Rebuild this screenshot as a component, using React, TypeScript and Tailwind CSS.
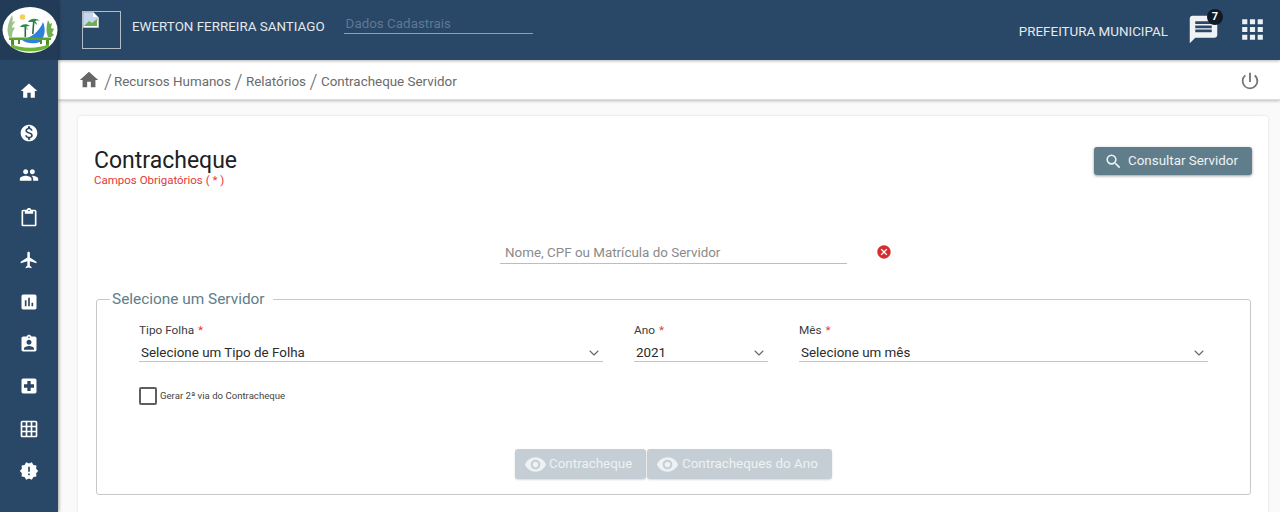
import {
  MdApps,
  MdAssessment,
  MdAssignmentInd,
  MdCancel,
  MdContentPaste,
  MdFlight,
  MdGridOn,
  MdHome,
  MdLocalHospital,
  MdMessage,
  MdMonetizationOn,
  MdNewReleases,
  MdPeople,
  MdPowerSettingsNew,
  MdSearch,
  MdVisibility,
} from "react-icons/md";
import { ChevronDown } from "lucide-react";

const menu = [
  MdHome,
  MdMonetizationOn,
  MdPeople,
  MdContentPaste,
  MdFlight,
  MdAssessment,
  MdAssignmentInd,
  MdLocalHospital,
  MdGridOn,
  MdNewReleases,
];

const Logo = () => (
  <svg viewBox="0 0 56 48" className="w-[56px] h-[48px]">
    <ellipse cx="28" cy="24" rx="27.5" ry="23" fill="#ffffff" />
    <circle cx="20.5" cy="11" r="2.8" fill="#f3cf55" />
    {/* side plants */}
    <path d="M7 31C4 24 6 17 10 9c1 3 1 5 0 7 2-1 3-1 3 0-2 2-3 4-3 6 1-1 2-1 3 0-2 2-3 5-3 9z" fill="#9cc48a" />
    <path d="M46 31c-2-5-2-10 0-17l2 4 2-1-1 5 3 1-2 4 2 2-3 2z" fill="#6fae4f" />
    {/* palms */}
    <path d="M22.5 20h1.6v11h-1.6zM31 15h1.6l-1 13h-1.6z" fill="#2c6b3f" />
    <path d="M18 21c1-3 7-4 10-1-2 0-3 0-4 1 1 1 2 2 2 3-2-2-3-3-3-3-2 0-3 0-5 0zM26 16c1-3 8-5 12-1-3-1-4 0-5 0 1 1 2 2 2 4-2-2-3-3-4-3-2 0-3 0-5 0z" fill="#2f8a4a" />
    {/* boat */}
    <path d="M20 34c9-2 18-9 21-18 3 7 2 15-3 20-5 2-13 2-18-2z" fill="#2f7fdc" />
    {/* bars */}
    <path d="M7 31.5h42v2.6H7z" fill="#58a52e" />
    <path d="M9 34h3v6H9zM44 34h3v6h-3zM16 34h2v4h-2zM38 34h2v4h-2z" fill="#4c8f2a" />
    <path d="M9 38c11 5 27 5 38 0v3c-11 6-27 6-38 0z" fill="#6cb536" />
  </svg>
);

const BrokenImage = () => (
  <svg viewBox="0 0 16 16" className="w-4 h-4">
    <path d="M.5.5h10l5 5v10H.5z" fill="#fff" stroke="#b9c3cc" />
    <path d="M1 1h9v4h5v3L9 14H1z" fill="#c5d7ee" />
    <path d="M1 14l5-5 3 2 5-4v7H1z" fill="#6fae4f" />
  </svg>
);

const Select = ({
  label,
  value,
  className,
}: {
  label: string;
  value: string;
  className: string;
}) => (
  <div className={className}>
    <div className="h-[22px] text-[11.8px] leading-[16px] text-[#3c3c3c]">
      {label} <span className="text-[#e53935] ml-[1px]">*</span>
    </div>
    <div className="flex items-center justify-between h-[18px] border-b border-[#c4c4c4] pl-[2px] pr-[1px] text-[13.4px] leading-[16px] text-[#2b2b2b]">
      <span>{value}</span>
      <ChevronDown size={16} strokeWidth={1.6} className="text-[#666]" />
    </div>
  </div>
);

const App = () => {
  return (
    <div className="flex h-[512px] w-[1280px] overflow-hidden bg-white font-['Roboto',sans-serif]">
      <aside className="w-[58px] shrink-0 bg-[#294766] shadow-[1px_0_3px_rgba(0,0,0,0.35)] z-20">
        <div className="h-[60px] bg-[#223c58] flex items-center justify-center pl-[2px]">
          <Logo />
        </div>
        <nav className="pt-[10px]">
          {menu.map((Icon, i) => (
            <div key={i} className="h-[42.2px] flex items-center justify-center text-white">
              <Icon size={20} />
            </div>
          ))}
        </nav>
      </aside>

      <div className="flex-1 min-w-0 flex flex-col">
        <header className="h-[60px] shrink-0 bg-[#294766] flex items-center pl-[24px] pr-[12px] z-10 shadow-[0_1px_3px_rgba(0,0,0,0.3)]">
          <div className="w-[39px] h-[38px] border border-[#b3bdc7] -mt-[1px]">
            <BrokenImage />
          </div>
          <span className="ml-[11px] text-[13.4px] text-[#e4e9ee] -mt-[5px]">
            EWERTON FERREIRA SANTIAGO
          </span>
          <div className="ml-[19px] w-[189px] h-[18px] border-b border-[#8d9fb1] pl-[2px] text-[13.4px] leading-[16px] text-[#5d7997] -mt-[10px]">
            Dados Cadastrais
          </div>
          <span className="ml-auto text-[13.4px] text-[#e4e9ee] mt-[4px]">PREFEITURA MUNICIPAL</span>
          <div className="relative ml-[19px] -mt-[1px] text-[#f0f3f6]">
            <MdMessage size={33} />
            <span className="absolute -top-[4px] left-[20px] w-[16px] h-[16px] rounded-full bg-[#0f1a26] text-white text-[11px] leading-[16px] font-bold text-center">
              7
            </span>
          </div>
          <MdApps size={31} className="ml-[17px] -mt-[1px] text-[#eef1f4]" />
        </header>

        <div className="h-[40px] shrink-0 bg-white flex items-center pt-[5px] pl-[20px] pr-[19px] text-[13.4px] text-[#6b6b6b] border-b border-[#ddd] shadow-[0_1px_3px_rgba(0,0,0,0.25)] z-[5]">
          <MdHome size={22} className="text-[#666] -mt-[4px]" />
          <span className="ml-[4px] text-[20px] leading-[20px] font-light">/</span>
          <span className="ml-[2px]">Recursos Humanos</span>
          <span className="mx-[3.5px] text-[20px] leading-[20px] font-light">/</span>
          <span>Relatórios</span>
          <span className="mx-[3.5px] text-[20px] leading-[20px] font-light">/</span>
          <span>Contracheque Servidor</span>
          <MdPowerSettingsNew size={22} className="ml-auto text-[#757575] -mt-[3px]" />
        </div>

        <main className="flex-1 min-h-0 bg-[#fafafa] pl-[20px] pr-[12px] pt-[16px]">
          <section className="h-[420px] bg-white rounded-[3px] shadow-[0_0_3px_rgba(0,0,0,0.12)] pl-[16px] pr-[16px] pt-[31px]">
            <div className="flex items-start justify-between">
              <div>
                <h1 className="text-[23px] leading-[28px] text-[#212121]">Contracheque</h1>
                <p className="text-[11.5px] leading-[12px] -mt-[1px] text-[#e53935]">
                  Campos Obrigatórios ( * )
                </p>
              </div>
              <button className="w-[158px] h-[28px] bg-[#607d8b] rounded-[3px] pl-[10px] text-[13.4px] text-[#eef2f4] flex items-center gap-[5px] shadow-[0_1px_3px_rgba(0,0,0,0.4)]">
                <MdSearch size={19} />
                Consultar Servidor
              </button>
            </div>

            <div className="flex items-center ml-[406px] mt-[56px]">
              <div className="w-[347px] h-[22px] border-b border-[#bdbdbd] pl-[5px] pt-[2px] text-[13.4px] leading-[18px] text-[#8a8a8a]">
                Nome, CPF ou Matrícula do Servidor
              </div>
              <MdCancel size={16} className="ml-[29px] -mt-[2px] text-[#d32f2f]" />
            </div>

            <fieldset className="mt-[26px] ml-[2px] w-[1155px] h-[205px] border border-[#c8c8c8] rounded-[3px] pl-[42px] pr-[42px]">
              <legend className="ml-[-29px] px-[2px] pr-[8px] text-[15.4px] leading-[18px] text-[#607d8b]">
                Selecione um Servidor
              </legend>
              <div className="flex pt-[14px]">
                <Select label="Tipo Folha" value="Selecione um Tipo de Folha" className="w-[464px]" />
                <Select label="Ano" value="2021" className="w-[134px] ml-[31px]" />
                <Select label="Mês" value="Selecione um mês" className="w-[409px] ml-[31px]" />
              </div>
              <label className="flex items-center mt-[25px] text-[9.6px] text-[#444]">
                <span className="w-[18px] h-[18px] border-2 border-[#5f5f5f] rounded-[2px]" />
                <span className="ml-[3px]">Gerar 2ª via do Contracheque</span>
              </label>
              <div className="flex justify-center gap-[1px] mt-[44px]">
                <button className="w-[131px] h-[30px] bg-[#c4ced4] rounded-[3px] pl-[9px] text-[13.4px] text-[#eef2f4] flex items-center gap-[2px] shadow-[0_1px_2px_rgba(0,0,0,0.15)]">
                  <MdVisibility size={23} />
                  <span className="pt-[1px]">Contracheque</span>
                </button>
                <button className="w-[185px] h-[30px] bg-[#c4ced4] rounded-[3px] pl-[9px] text-[13.4px] text-[#eef2f4] flex items-center gap-[3px] shadow-[0_1px_2px_rgba(0,0,0,0.15)]">
                  <MdVisibility size={23} />
                  <span className="pt-[1px]">Contracheques do Ano</span>
                </button>
              </div>
            </fieldset>
          </section>
        </main>
      </div>
    </div>
  );
};

export default App;
